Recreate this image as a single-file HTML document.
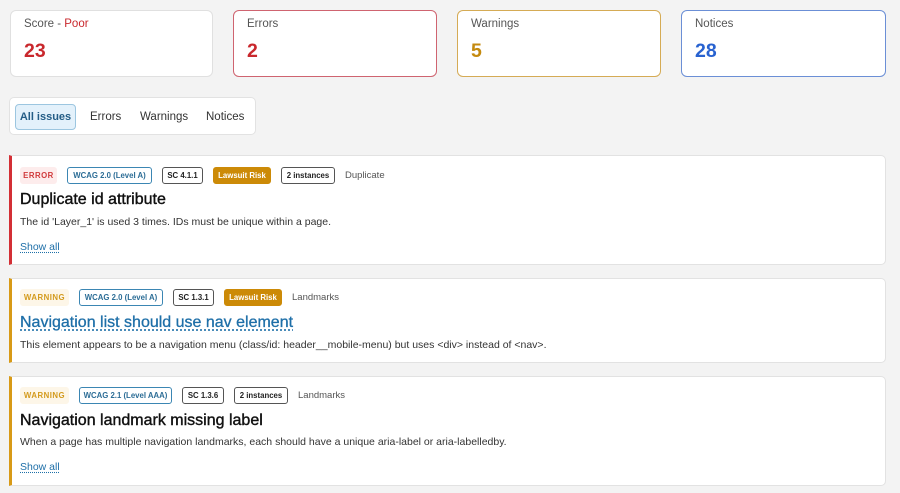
<!DOCTYPE html>
<html><head><meta charset="utf-8"><style>
*{box-sizing:border-box;margin:0;padding:0}
body{width:900px;height:493px;background:#f3f3f3;font-family:"Liberation Sans",Arial,sans-serif;position:relative;overflow:hidden;color:#1a1a1a}
.stat{position:absolute;top:10px;height:67px;background:#fff;border:1px solid #e0e0e0;border-radius:6px;padding:0 13px}
.stat .l{font-size:11.5px;color:#555;margin-top:7px}
.stat .n{font-size:19.5px;font-weight:bold;margin-top:10px}
.tabs{position:absolute;left:9px;top:97px;width:247px;height:38px;background:#fff;border:1px solid #e2e2e2;border-radius:5px}
.tab{position:absolute;top:6px;height:26px;line-height:26px;font-size:11.5px;color:#333}
.card{position:absolute;left:9px;width:877px;background:#fff;border:1px solid #e2e2e2;border-left:3px solid;border-radius:0 5px 5px 0}
.row{position:absolute;left:8px;height:17px;display:flex;align-items:center}
.b{height:17px;line-height:15px;font-size:7.8px;font-weight:bold;border:1px solid #555;border-radius:3px;text-align:center;margin-right:10px;color:#222;white-space:nowrap}
.b.err{background:#fdecec;border-color:#fdecec;color:#d0393b;letter-spacing:.5px}
.b.warn{background:#fdf6e8;border-color:#fdf6e8;color:#d39a1c;letter-spacing:.5px}
.b.w{border-color:#3b86b3;color:#2c6d96}
.b.law{background:#cc8a07;border-color:#cc8a07;color:#fff}
.cat{font-size:9.5px;color:#555}
.t{position:absolute;left:8px;font-size:16px;color:#111;white-space:nowrap;-webkit-text-stroke:0.4px #111}
.t.link{color:#1e6fa8;-webkit-text-stroke:0.3px #1e6fa8;text-decoration:underline dotted;text-underline-offset:3px}
.d{position:absolute;left:8px;font-size:10.5px;color:#333;white-space:nowrap}
.s{position:absolute;left:8px;font-size:10.5px;color:#1e6fa8;text-decoration:underline dotted;text-underline-offset:2px}
</style></head><body>
<div class="stat" style="left:10px;width:203px"><div class="l">Score - <span style="color:#c9282d">Poor</span></div><div class="n" style="color:#c9282d">23</div></div>
<div class="stat" style="left:233px;width:204px;border-color:#cf6470"><div class="l">Errors</div><div class="n" style="color:#c9282d">2</div></div>
<div class="stat" style="left:457px;width:204px;border-color:#d5ab55"><div class="l">Warnings</div><div class="n" style="color:#c48a0f">5</div></div>
<div class="stat" style="left:681px;width:205px;border-color:#6b8fd6"><div class="l">Notices</div><div class="n" style="color:#2862d0">28</div></div>

<div class="tabs">
<div class="tab" style="left:5px;width:61px;background:#e3f1fb;border:1px solid #9cc6e0;border-radius:4px;text-align:center;color:#245d86;font-weight:bold;line-height:24px;font-size:11px">All issues</div>
<div class="tab" style="left:80px">Errors</div>
<div class="tab" style="left:130px">Warnings</div>
<div class="tab" style="left:196px">Notices</div>
</div>

<div class="card" style="top:155px;height:110px;border-left-color:#d32f35">
<div class="row" style="top:11px"><div class="b err" style="width:37px">ERROR</div><div class="b w" style="width:85px">WCAG 2.0 (Level A)</div><div class="b" style="width:41px">SC 4.1.1</div><div class="b law" style="width:58px">Lawsuit Risk</div><div class="b" style="width:54px">2 instances</div><div class="cat">Duplicate</div></div>
<div class="t" style="top:35px">Duplicate id attribute</div>
<div class="d" style="top:60px">The id 'Layer_1' is used 3 times. IDs must be unique within a page.</div>
<div class="s" style="top:85px">Show all</div>
</div>

<div class="card" style="top:278px;height:85px;border-left-color:#d89a17">
<div class="row" style="top:10px"><div class="b warn" style="width:49px">WARNING</div><div class="b w" style="width:84px">WCAG 2.0 (Level A)</div><div class="b" style="width:41px">SC 1.3.1</div><div class="b law" style="width:58px">Lawsuit Risk</div><div class="cat">Landmarks</div></div>
<div class="t link" style="top:35px">Navigation list should use nav element</div>
<div class="d" style="top:60px">This element appears to be a navigation menu (class/id: header__mobile-menu) but uses &lt;div&gt; instead of &lt;nav&gt;.</div>
</div>

<div class="card" style="top:376px;height:110px;border-left-color:#d89a17">
<div class="row" style="top:10px"><div class="b warn" style="width:49px">WARNING</div><div class="b w" style="width:93px">WCAG 2.1 (Level AAA)</div><div class="b" style="width:42px">SC 1.3.6</div><div class="b" style="width:54px">2 instances</div><div class="cat">Landmarks</div></div>
<div class="t" style="top:35px">Navigation landmark missing label</div>
<div class="d" style="top:59px">When a page has multiple navigation landmarks, each should have a unique aria-label or aria-labelledby.</div>
<div class="s" style="top:84px">Show all</div>
</div>
</body></html>
